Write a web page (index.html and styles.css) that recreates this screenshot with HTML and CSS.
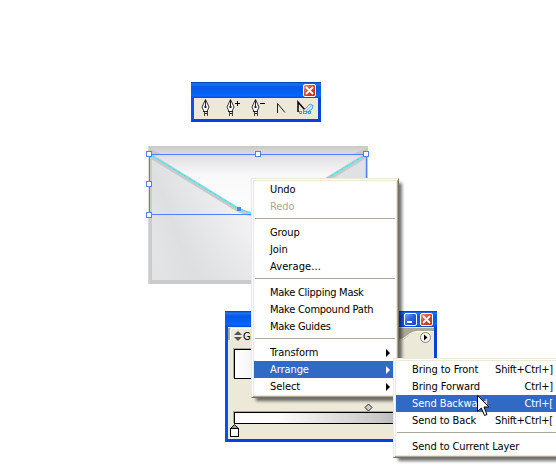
FILE: index.html
```html
<!DOCTYPE html>
<html lang="en">
<head>
<meta charset="utf-8">
<title>Arrange menu</title>
<link rel="stylesheet" href="styles.css">
</head>
<body>
<main class="desktop">
  <section class="window tools">
    <header class="titlebar"><span class="btn close"><svg width="9" height="9" viewBox="0 0 9 9"><path d="M1 1l7 7M8 1l-7 7"/></svg></span></header>
    <svg class="toolrow" width="124" height="21" viewBox="194 98 124 21">
      <defs>
        <g id="pen"><path d="M4.500 .5L1 8L3 12.500H6L8 8Z" fill="#fff" stroke="#333"/><path d="M4.500 1V8" stroke="#222" fill="none"/><rect x="3.500" y="7" width="2" height="2" fill="#222"/><path d="M2 12.500h5M3 14.500h3" stroke="#222"/><path d="M3.500 13v4M6.500 13v4" stroke="#444"/></g>
      </defs>
      <use href="#pen" x="201" y="99"/>
      <use href="#pen" x="226" y="99"/>
      <use href="#pen" x="251" y="99"/>
      <path d="M235 103.500h5M237.500 101v5M260 103.500h5" stroke="#000" fill="none"/>
      <path d="M277.500 113V103.500L285 112.500" stroke="#222" fill="none"/>
      <path d="M298 112V102L305 110" stroke="#000" stroke-width="1.500" fill="none"/>
      <path d="M303 111L310 104L313 105.500L312 109L306 113" stroke="#35a5e5" fill="#d7effb"/><path d="M306 111L312 105" stroke="#6cc4f0"/>
      <g fill="#fff" stroke="#35a5e5"><rect x="299.500" y="111.500" width="2" height="2"/><rect x="303.500" y="111.500" width="3" height="2"/><rect x="308.500" y="111.500" width="2" height="2"/></g>
    </svg>
  </section>

  <svg class="envelope" width="224" height="142" viewBox="146 144 224 142">
    <defs>
      <linearGradient id="flap" x1="0" y1="0" x2="0" y2="1"><stop offset="0" stop-color="#cfcfcf"/><stop offset=".14" stop-color="#e2e2e4"/><stop offset=".4" stop-color="#f8f8f9"/><stop offset="1" stop-color="#fff"/></linearGradient>
      <linearGradient id="body" x1="148" y1="235" x2="275" y2="185" gradientUnits="userSpaceOnUse"><stop offset="0" stop-color="#e4e5e7"/><stop offset=".2" stop-color="#dddfe1"/><stop offset=".7" stop-color="#f1f1f2"/><stop offset="1" stop-color="#fff"/></linearGradient>
      <linearGradient id="low" x1="0" y1="235" x2="0" y2="284" gradientUnits="userSpaceOnUse"><stop offset="0" stop-color="#dcdee0" stop-opacity="0"/><stop offset="1" stop-color="#dcdee0" stop-opacity=".4"/></linearGradient>
    </defs>
    <rect x="148" y="146" width="220" height="138" fill="#cbcbcb"/>
    <rect x="152" y="150" width="213" height="130" fill="url(#body)"/>
    <rect x="152" y="235" width="213" height="45" fill="url(#low)"/>
    <path d="M320 182L365 155V200H320Z" fill="#e0e1e3"/>
    <path d="M151 148H366V155L278 208Q258 221 238 208L151 155Z" fill="url(#flap)"/>
    <path d="M149 148L161 154H149ZM368 148L353 154H368Z" fill="#c7c7c7"/>
    <path d="M149 155L237 209Q258 220 279 209L367 155" fill="none" stroke="#c9c9c9" stroke-width="4.500"/>
    <path d="M148.500 146V284" stroke="#dadada"/>
    <rect x="149.500" y="154.500" width="217" height="60" fill="none" stroke="#4f80ff"/>
    <path d="M149 154L238 208.500Q258 219 278 208.500L367 154" fill="none" stroke="#4f80ff" stroke-width=".6"/>
    <path d="M149 154L238 208.500Q258 219 278 208.500L367 154" fill="none" stroke="#4df5f3" stroke-width="1.400" stroke-dasharray="5 1"/>
    <rect x="237" y="207" width="4" height="4" fill="#4f80ff"/>
    <g fill="#fff" stroke="#4f80ff"><rect x="146.500" y="151.500" width="5" height="5"/><rect x="255.500" y="151.500" width="5" height="5"/><rect x="363.500" y="151.500" width="5" height="5"/><rect x="146.500" y="181.500" width="5" height="5"/><rect x="146.500" y="212.500" width="5" height="5"/></g>
  </svg>

  <section class="window palette">
    <header class="titlebar"><span class="btn min"></span><span class="btn close"><svg width="9" height="9" viewBox="0 0 9 9"><path d="M1 1l7 7M8 1l-7 7"/></svg></span></header>
    <div class="palette-body">
      <svg class="tabs" width="206" height="20" viewBox="228 328 206 20">
        <path d="M228 328H434V332H418C406 332 410 341 395 341H228Z" fill="#aca899"/>
        <path d="M231 345V329H380V341H396C409 341 407 332 418 332H434V348H228V341H231Z" fill="#ece9d8"/>
        <path d="M228 340.500H230.500V328.500H380M395 340.500C408 340 407 331.500 418 331.500H434" fill="none" stroke="#fff"/>
        <path d="M234 335L238 331L242 335ZM234 337H242L238 341Z" fill="#555"/>
        <circle cx="425.500" cy="337.500" r="5" fill="#f6f5ee" stroke="#8c897d"/><path d="M424 334.500V340.500L427.500 337.500Z"/>
      </svg>
      <span class="tab-label">Gradient</span>
      <div class="swatch"></div>
      <div class="ramp"></div>
      <svg class="stops" width="206" height="38" viewBox="228 401 206 38">
        <path d="M365 407.500L368.500 404L372 407.500L368.500 411Z" fill="#d0d0cc" stroke="#222"/>
        <path d="M230.500 428.500L234.500 424.500L238.500 428.500Z" fill="#999" stroke="#111"/><rect x="230.500" y="428.500" width="8" height="8" fill="#fff" stroke="#000"/>
      </svg>
    </div>
  </section>

  <nav class="menu context">
    <div class="item">Undo</div>
    <div class="item disabled">Redo</div>
    <hr>
    <div class="item">Group</div>
    <div class="item">Join</div>
    <div class="item dots">Average...</div>
    <hr>
    <div class="item tight">Make Clipping Mask</div>
    <div class="item tight">Make Compound Path</div>
    <div class="item tight">Make Guides</div>
    <hr>
    <div class="item">Transform<i class="arrow"></i></div>
    <div class="item active">Arrange<i class="arrow"></i></div>
    <div class="item">Select<i class="arrow"></i></div>
  </nav>

  <nav class="menu submenu">
    <div class="item"><span>Bring to Front</span><span class="keys">Shift+Ctrl+]</span></div>
    <div class="item"><span>Bring Forward</span><span class="keys">Ctrl+]</span></div>
    <div class="item active"><span>Send Backward</span><span class="keys">Ctrl+[</span></div>
    <div class="item"><span>Send to Back</span><span class="keys">Shift+Ctrl+[</span></div>
    <hr>
    <div class="item"><span>Send to Current Layer</span></div>
  </nav>

  <svg class="cursor" width="14" height="23" viewBox="0 0 14 23"><path d="M.5 .5V16.500L4.300 13L7.500 20.500L10 19.500L7 12H12Z" fill="#fff" stroke="#000"/></svg>
</main>
</body>
</html>
```

FILE: styles.css
```css
* { box-sizing: border-box; }
body { margin: 0; background: #fff; font: 11px/17px "DejaVu Sans Condensed", "DejaVu Sans", sans-serif; font-stretch: condensed; color: #000; }
.desktop { position: relative; width: 556px; height: 474px; overflow: hidden; }
.window { position: absolute; background: #ece9d8; border: 3px solid #0a50ea; border-top: 0; border-right-color: #0742d8; border-bottom-color: #0742d8; }
.tools { left: 191px; top: 82px; width: 130px; height: 40px; }
.palette { left: 225px; top: 311px; width: 212px; height: 131px; }
.titlebar { height: 16px; margin: 0 -3px; padding: 1px 5px 0 0; display: flex; justify-content: flex-end; gap: 3px; background: linear-gradient(#0837b0 0, #1c75f5 2px, #0758e6 5px, #0560f3 11px, #0668ff 14px, #0444c6 16px); }
.tools .titlebar { padding-top: 2px; }
.btn { width: 13px; height: 13px; border: 1px solid #fff; border-radius: 2px; display: grid; place-items: center; }
.palette .btn { margin-top: 1px; }
.palette .titlebar { padding-right: 4px; }
.close { background: linear-gradient(135deg, #f09a7c, #dd4820 45%, #c33108); }
.close path { fill: none; stroke: #fff; stroke-width: 1.8; }
.min { background: linear-gradient(135deg, #789df5, #2860df 50%, #1747c8); }
.min::after { content: ""; width: 5px; height: 2px; background: #fff; margin: 5px 3px 0 0; }
.toolrow { display: block; }
.envelope { position: absolute; left: 146px; top: 144px; }
.palette-body { display: flex; flex-direction: column; position: relative; padding-top: 1px; }
.palette-body svg { display: block; }
.tab-label { position: absolute; left: 15px; top: 1px; letter-spacing: -.4px; }
.swatch { width: 32px; height: 30px; margin: 1px 0 0 6px; border: 1px solid #000; background: linear-gradient(90deg, #fff, #eee); box-shadow: -1px -1px #aca899; }
.ramp { margin: 33px 4px 0 6px; height: 12px; border: 1px solid #000; box-shadow: -1px -1px #aca899; background: linear-gradient(90deg, #fff 20%, #c8c8c8 75%, #999); }
.stops { position: absolute; left: 0; top: 74px; }
.menu { position: absolute; background: #fff; border: 1px solid; border-color: #ece9d8 #716f64 #716f64 #ece9d8; box-shadow: inset 1px 1px #fff, inset -1px -1px #aca899, 4px 4px 3px -1px rgba(0,0,0,.55); }
.menu::before { content: ""; position: absolute; inset: 1px; border: 1px solid #ece9d8; pointer-events: none; }
.context { left: 251px; top: 178px; width: 148px; height: 220px; padding: 2px; }
.submenu { left: 393px; top: 358px; width: 180px; height: 100px; padding: 2px; }
.item { height: 17px; padding-left: 17px; white-space: nowrap; display: flex; position: relative; align-items: center; letter-spacing: -.08px; }
.context .item { padding-left: 16px; padding-right: 6px; }
.submenu .item { justify-content: space-between; padding-left: 16px; padding-right: 17px; }
.active { background: #316ac5; color: #fff; }
.disabled { color: #aca899; }
.item.dots { letter-spacing: .1px; }
.item.tight { letter-spacing: -.25px; }
.keys { letter-spacing: -.22px; }
.arrow { margin-left: auto; border: 4px solid transparent; border-left-color: currentColor; border-right: 0; }
hr { height: 1px; margin: 3px 1px 5px; border: 0; background: #aca899; }
.cursor { position: absolute; left: 477px; top: 395px; }
```
